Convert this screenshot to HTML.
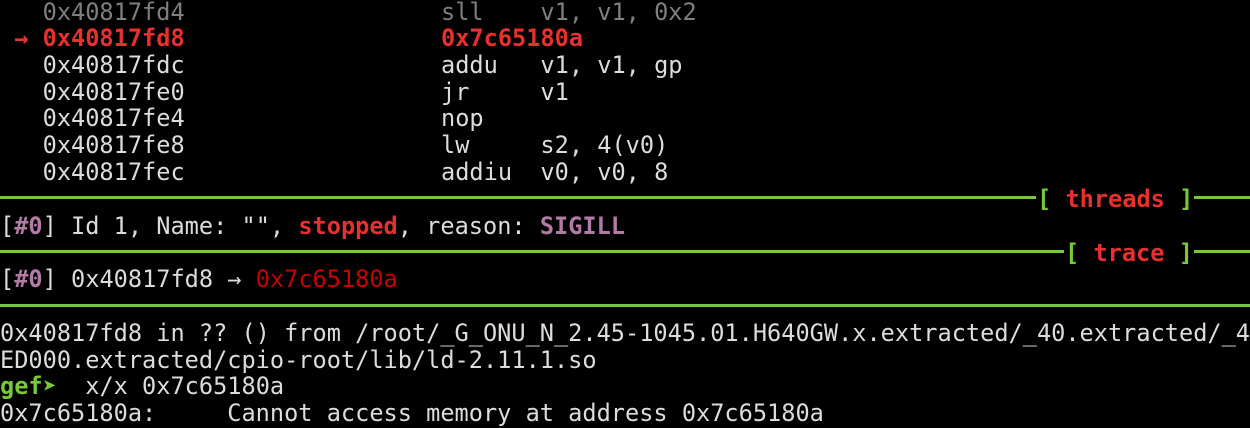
<!DOCTYPE html>
<html><head><meta charset="utf-8"><style>
html,body{margin:0;padding:0;background:#000;width:1250px;height:428px;overflow:hidden}
.l{position:absolute;left:0;height:26.7px;line-height:26.7px;font-family:"DejaVu Sans Mono","Liberation Mono",monospace;font-size:23.6px;color:#dcdcdc;white-space:pre}
.i{position:absolute;left:441px;white-space:pre}
.g{color:#7f7f7f}.r{color:#e8302e;font-weight:bold}.p{color:#b27ba6;font-weight:bold}.dr{color:#c80000}.gr{color:#76c93a;font-weight:bold}
.rule{position:absolute;left:0;width:1250px;height:3px;background:#76c93a}
.lab{position:absolute;background:#000;padding:0 1px;font-family:"DejaVu Sans Mono","Liberation Mono",monospace;font-size:23.6px;line-height:26.7px;font-weight:bold;white-space:pre}
</style></head><body>
<div class="l g" style="top:-1.4px">   0x40817fd4<span class="i">sll    v1, v1, 0x2</span></div>
<div class="l r" style="top:25.3px"> → 0x40817fd8<span class="i">0x7c65180a</span></div>
<div class="l" style="top:52px">   0x40817fdc<span class="i">addu   v1, v1, gp</span></div>
<div class="l" style="top:78.7px">   0x40817fe0<span class="i">jr     v1</span></div>
<div class="l" style="top:105.4px">   0x40817fe4<span class="i">nop</span></div>
<div class="l" style="top:132.1px">   0x40817fe8<span class="i">lw     s2, 4(v0)</span></div>
<div class="l" style="top:158.8px">   0x40817fec<span class="i">addiu  v0, v0, 8</span></div>
<div class="rule" style="top:196px"></div>
<div class="lab" style="top:185.5px;left:1036px"><span class="gr">[</span> <span style="color:#e8302e">threads</span> <span class="gr">]</span></div>
<div class="l" style="top:212.8px">[<span class="p">#0</span>] Id 1, Name: "", <span class="r">stopped</span>, reason: <span class="p">SIGILL</span></div>
<div class="rule" style="top:250px"></div>
<div class="lab" style="top:239.5px;left:1064px"><span class="gr">[</span> <span style="color:#e8302e">trace</span> <span class="gr">]</span></div>
<div class="l" style="top:266.4px">[<span class="p">#0</span>] 0x40817fd8 → <span class="dr">0x7c65180a</span></div>
<div class="rule" style="top:304px"></div>
<div class="l" style="top:320px">0x40817fd8 in ?? () from /root/_G_ONU_N_2.45-1045.01.H640GW.x.extracted/_40.extracted/_4</div>
<div class="l" style="top:346.7px">ED000.extracted/cpio-root/lib/ld-2.11.1.so</div>
<div class="l" style="top:373.4px"><span class="gr">gef➤</span>  x/x 0x7c65180a</div>
<div class="l" style="top:400.3px">0x7c65180a:     Cannot access memory at address 0x7c65180a</div>
</body></html>
